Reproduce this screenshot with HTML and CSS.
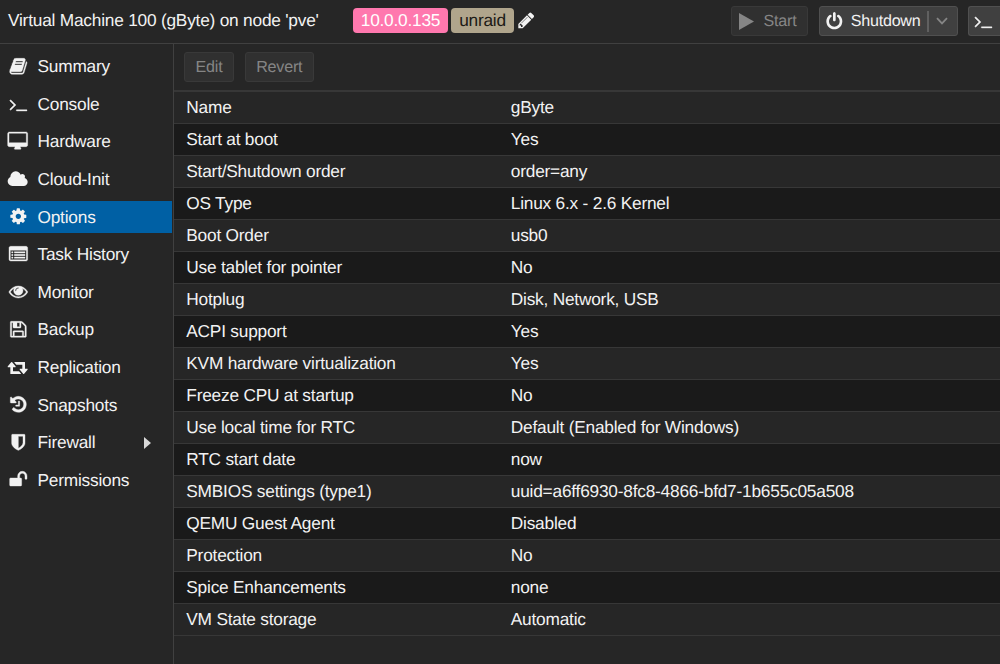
FILE: index.html
```html
<!DOCTYPE html>
<html lang="en">
<head>
<meta charset="utf-8">
<title>Virtual Machine 100 (gByte)</title>
<link rel="stylesheet" href="styles.css">
</head>
<body>
<div class="app">
  <header class="header">
    <div class="title">Virtual Machine 100 (gByte) on node 'pve'</div>
    <div class="tags">
      <span class="tag tag-pink">10.0.0.135</span>
      <span class="tag tag-sand">unraid</span>
      <svg class="pencil" viewBox="0 0 1792 1792"><path d="M491 1536l91-91-235-235-91 91v107h128v128h107zm523-928q0-22-22-22-10 0-17 7l-542 542q-7 7-7 17 0 22 22 22 10 0 17-7l542-542q7-7 7-17zm-54-192l416 416-832 832h-416v-416zm683 96q0 53-37 90l-166 166-416-416 166-165q36-38 90-38 53 0 91 38l235 234q37 39 37 91z"/></svg>
    </div>
    <div class="actions">
      <div class="btn btn-start disabled"><svg class="play" viewBox="0 0 15 17"><path d="M0 0L15 8.5L0 17z"/></svg><span>Start</span></div>
      <div class="btn btn-shutdown"><svg class="icon" viewBox="0 0 1792 1792"><path d="M1664 896q0 156-61 298t-164 245-245 164-298 61-298-61-245-164-164-245-61-298q0-182 80.5-343t226.5-270q43-32 95.5-25t83.5 50q32 42 24.5 94.5t-49.5 84.5q-98 74-151.5 181t-53.5 228q0 104 40.5 198.5t109.5 163.5 163.5 109.5 198.5 40.5 198.5-40.5 163.5-109.5 109.5-163.5 40.5-198.5q0-121-53.5-228t-151.5-181q-42-32-49.5-84.5t24.5-94.5q31-43 84-50t95 25q146 109 226.5 270t80.5 343zm-640-768v640q0 52-38 90t-90 38-90-38-38-90v-640q0-52 38-90t90-38 90 38 38 90z"/></svg><span>Shutdown</span><i class="split"></i><svg class="chevron" viewBox="0 0 12 8"><path d="M1 1.2L6 6.4L11 1.2"/></svg></div>
      <div class="btn btn-console"><svg class="icon bold" viewBox="0 0 1792 1792"><path d="M649 983l-466 466q-10 10-23 10t-23-10l-50-50q-10-10-10-23t10-23l393-393-393-393q-10-10-10-23t10-23l50-50q10-10 23-10t23 10l466 466q10 10 10 23t-10 23zm1079 457v64q0 14-9 23t-23 9h-960q-14 0-23-9t-9-23v-64q0-14 9-23t23-9h960q14 0 23 9t9 23z"/></svg></div>
    </div>
  </header>
  <div class="body">
    <nav class="sidebar">
      <div class="item"><span class="ic"><svg class="icon bold" viewBox="0 0 1792 1792"><path d="M1703 478q40 57 18 129l-275 906q-19 64-76.5 107.5t-122.5 43.5h-923q-77 0-148.5-53.5t-99.5-131.5q-24-67-2-127 0-4 3-27t4-37q1-8-3-21.5t-3-19.5q2-11 8-21t16.5-23.5 16.5-23.5q23-38 45-91.5t30-91.5q3-10 .5-30t-.5-28q3-11 17-28t17-23q21-36 42-92t25-90q1-9-2.5-32t.5-28q4-13 22-30.5t22-22.5q19-26 42.5-84.5t27.5-96.5q1-8-3-25.5t-2-26.5q2-8 9-18t18-23 17-21q8-12 16.5-30.5t15-35 16-36 19.5-32 26.5-23.5 36-11.5 47.5 5.5l-1 3q38-9 51-9h761q74 0 114 56t18 130l-274 906q-36 119-71.5 153.5t-128.5 34.5h-869q-27 0-38 15-11 16-1 43 24 70 144 70h923q29 0 56-15.5t35-41.5l300-987q7-22 5-57 38 15 59 43zm-1064 2q-4 13 2 22.5t20 9.5h608q13 0 25.5-9.5t16.5-22.5l21-64q4-13-2-22.5t-20-9.5h-608q-13 0-25.5 9.5t-16.5 22.5zm-83 256q-4 13 2 22.5t20 9.5h608q13 0 25.5-9.5t16.5-22.5l21-64q4-13-2-22.5t-20-9.5h-608q-13 0-25.5 9.5t-16.5 22.5z"/></svg></span>Summary</div>
      <div class="item"><span class="ic"><svg class="icon bold" viewBox="0 0 1792 1792"><path d="M649 983l-466 466q-10 10-23 10t-23-10l-50-50q-10-10-10-23t10-23l393-393-393-393q-10-10-10-23t10-23l50-50q10-10 23-10t23 10l466 466q10 10 10 23t-10 23zm1079 457v64q0 14-9 23t-23 9h-960q-14 0-23-9t-9-23v-64q0-14 9-23t23-9h960q14 0 23 9t9 23z"/></svg></span>Console</div>
      <div class="item"><span class="ic"><svg class="icon wide bold" viewBox="0 0 2048 1792"><path d="M1856 992v-832q0-13-9.5-22.5t-22.5-9.5h-1600q-13 0-22.5 9.5t-9.5 22.5v832q0 13 9.5 22.5t22.5 9.5h1600q13 0 22.5-9.5t9.5-22.5zm128-832v1088q0 66-47 113t-113 47h-544q0 37 16 77.5t32 71 16 43.5q0 26-19 45t-45 19h-512q-26 0-45-19t-19-45q0-14 16-44t32-70 16-78h-544q-66 0-113-47t-47-113v-1088q0-66 47-113t113-47h1600q66 0 113 47t47 113z"/></svg></span>Hardware</div>
      <div class="item"><span class="ic"><svg class="icon wide" viewBox="0 0 2048 1792"><path d="M1984 1152q0 159-112.5 271.5t-271.5 112.5h-1088q-185 0-316.5-131.5t-131.5-316.5q0-132 71-241.5t187-163.5q-2-28-2-43 0-212 150-362t362-150q158 0 286.5 88t187.5 230q70-62 166-62 106 0 181 75t75 181q0 75-41 138 129 30 213 134.5t84 239.5z"/></svg></span>Cloud-Init</div>
      <div class="item active"><span class="ic"><svg class="icon" viewBox="0 0 1792 1792"><path d="M1152 896q0-106-75-181t-181-75-181 75-75 181 75 181 181 75 181-75 75-181zm512-109v222q0 12-8 23t-20 13l-185 28q-19 54-39 91 35 50 107 138 10 12 10 25t-9 23q-27 37-99 108t-94 71q-12 0-26-9l-138-108q-44 23-91 38-16 136-29 186-7 28-36 28h-222q-14 0-24.5-8.5t-11.5-21.5l-28-184q-49-16-90-37l-141 107q-10 9-25 9-14 0-25-11-126-114-165-168-7-10-7-23 0-12 8-23 15-21 51-66.5t54-70.5q-27-50-41-99l-183-27q-13-2-21-12.5t-8-23.5v-222q0-12 8-23t19-13l186-28q14-46 39-92-40-57-107-138-10-12-10-24 0-10 9-23 26-36 98.5-107.5t94.5-71.5q13 0 26 10l138 107q44-23 91-38 16-136 29-186 7-28 36-28h222q14 0 24.5 8.5t11.5 21.5l28 184q49 16 90 37l142-107q9-9 24-9 13 0 25 10 129 119 165 170 7 8 7 22 0 12-8 23-15 21-51 66.5t-54 70.5q26 50 41 98l183 28q13 2 21 12.5t8 23.5z"/></svg></span>Options</div>
      <div class="item"><span class="ic"><svg class="icon bold" viewBox="0 0 1792 1792"><path fill-rule="evenodd" d="M160 128h1472q66 0 113 47t47 113v1088q0 66-47 113t-113 47H160q-66 0-113-47T0 1376V288q0-66 47-113t113-47zM128 512v864q0 32 32 32h1472q32 0 32-32V512zM256 640h128v128H256zM512 640h1024v128H512zM256 896h128v128H256zM512 896h1024v128H512zM256 1152h128v128H256zM512 1152h1024v128H512z"/></svg></span>Task History</div>
      <div class="item"><span class="ic"><svg class="icon bold" viewBox="0 0 1792 1792"><path d="M1664 960q-152-236-381-353 61 104 61 225 0 185-131.5 316.5t-316.5 131.5-316.5-131.5-131.5-316.5q0-121 61-225-229 117-381 353 133 205 333.5 326.5t434.5 121.5 434.5-121.5 333.5-326.5zm-720-384q0-20-14-34t-34-14q-125 0-214.5 89.5t-89.5 214.5q0 20 14 34t34 14 34-14 14-34q0-86 61-147t147-61q20 0 34-14t14-34zm848 384q0 34-20 69-140 230-376.5 368.5t-499.5 138.5-499.5-139-376.5-368q-20-35-20-69t20-69q140-229 376.5-368t499.5-139 499.5 139 376.5 368q20 35 20 69z"/></svg></span>Monitor</div>
      <div class="item"><span class="ic"><svg class="icon bold" viewBox="0 0 1792 1792"><path d="M512 1536h768v-384h-768v384zm896 0h128v-896q0-14-10-38.5t-20-34.5l-281-281q-10-10-34-20t-39-10v416q0 40-28 68t-68 28h-576q-40 0-68-28t-28-68v-416h-128v1280h128v-416q0-40 28-68t68-28h832q40 0 68 28t28 68v416zm-384-928v-320q0-13-9.5-22.5t-22.5-9.5h-192q-13 0-22.5 9.5t-9.5 22.5v320q0 13 9.5 22.5t22.5 9.5h192q13 0 22.5-9.5t9.5-22.5zm640 32v928q0 40-28 68t-68 28h-1344q-40 0-68-28t-28-68v-1344q0-40 28-68t68-28h928q40 0 88 20t76 48l280 280q28 28 48 76t20 88z"/></svg></span>Backup</div>
      <div class="item"><span class="ic"><svg class="icon wide" viewBox="0 0 2048 1792"><path d="M1344 1504q0 13-9.5 22.5t-22.5 9.5h-960q-8 0-13.5-2t-9-7-5.5-8-3-11.5-1-11.5v-600h-192q-26 0-45-19t-19-45q0-24 15-41l320-384q19-22 49-22t49 22l320 384q15 17 15 41 0 26-19 45t-45 19h-192v384h576q16 0 25 11l160 192q7 10 7 21zm640-416q0 24-15 41l-320 384q-20 23-49 23t-49-23l-320-384q-15-17-15-41 0-26 19-45t45-19h192v-384h-576q-16 0-25-12l-160-192q-7-9-7-20 0-13 9.5-22.5t22.5-9.5h960q8 0 13.5 2t9 7 5.5 8 3 11.5 1 11.5v600h192q26 0 45 19t19 45z"/></svg></span>Replication</div>
      <div class="item"><span class="ic"><svg class="icon bold" viewBox="0 0 1792 1792"><path d="M1664 896q0 156-61 298t-164 245-245 164-298 61q-172 0-327-72.5t-264-204.5q-7-10-6.5-22.5t8.5-20.5l137-138q10-9 25-9 16 2 23 12 73 95 179 147t225 52q104 0 198.5-40.5t163.5-109.5 109.5-163.5 40.5-198.5-40.5-198.5-109.5-163.5-163.5-109.5-198.5-40.5q-98 0-188 35.5t-160 101.5l137 138q31 30 14 69-17 40-59 40h-448q-26 0-45-19t-19-45v-448q0-42 40-59 39-17 69 14l130 129q107-101 244.5-156.5t284.5-55.5q156 0 298 61t245 164 164 245 61 298zm-640-288v448q0 14-9 23t-23 9h-320q-14 0-23-9t-9-23v-64q0-14 9-23t23-9h224v-352q0-14 9-23t23-9h64q14 0 23 9t9 23z"/></svg></span>Snapshots</div>
      <div class="item"><span class="ic"><svg class="icon bold" viewBox="0 0 1792 1792"><path d="M1344 960v-640h-448v1137q119-63 213-137 235-184 235-360zm192-768v768q0 86-33.5 170.5t-83 150-118 127.5-126.5 103-121 77.5-89.5 49.5-42.5 20q-12 6-26 6t-26-6q-16-7-42.5-20t-89.5-49.5-121-77.5-126.5-103-118-127.5-83-150-33.5-170.5v-768q0-26 19-45t45-19h1152q26 0 45 19t19 45z"/></svg></span>Firewall<svg class="expand" viewBox="0 0 7 12"><path d="M0 0L7 6L0 12z"/></svg></div>
      <div class="item"><span class="ic"><svg class="icon bold" viewBox="0 0 1792 1792"><path d="M1728 576v256q0 26-19 45t-45 19h-64q-26 0-45-19t-19-45v-256q0-106-75-181t-181-75-181 75-75 181v192h96q40 0 68 28t28 68v576q0 40-28 68t-68 28h-960q-40 0-68-28t-28-68v-576q0-40 28-68t68-28h672v-192q0-185 131.5-316.5t316.5-131.5 316.5 131.5 131.5 316.5z"/></svg></span>Permissions</div>
    </nav>
    <main class="content">
      <div class="toolbar">
        <div class="btn btn-edit disabled">Edit</div>
        <div class="btn btn-revert disabled">Revert</div>
      </div>
      <div class="grid">
        <div class="row"><span>Name</span><span>gByte</span></div>
        <div class="row"><span>Start at boot</span><span>Yes</span></div>
        <div class="row"><span>Start/Shutdown order</span><span>order=any</span></div>
        <div class="row"><span>OS Type</span><span>Linux 6.x - 2.6 Kernel</span></div>
        <div class="row"><span>Boot Order</span><span>usb0</span></div>
        <div class="row"><span>Use tablet for pointer</span><span>No</span></div>
        <div class="row"><span>Hotplug</span><span>Disk, Network, USB</span></div>
        <div class="row"><span>ACPI support</span><span>Yes</span></div>
        <div class="row"><span>KVM hardware virtualization</span><span>Yes</span></div>
        <div class="row"><span>Freeze CPU at startup</span><span>No</span></div>
        <div class="row"><span>Use local time for RTC</span><span>Default (Enabled for Windows)</span></div>
        <div class="row"><span>RTC start date</span><span>now</span></div>
        <div class="row"><span>SMBIOS settings (type1)</span><span>uuid=a6ff6930-8fc8-4866-bfd7-1b655c05a508</span></div>
        <div class="row"><span>QEMU Guest Agent</span><span>Disabled</span></div>
        <div class="row"><span>Protection</span><span>No</span></div>
        <div class="row"><span>Spice Enhancements</span><span>none</span></div>
        <div class="row"><span>VM State storage</span><span>Automatic</span></div>
      </div>
    </main>
  </div>
</div>
</body>
</html>
```

FILE: styles.css
```css
* { box-sizing: border-box; }
body {
  margin: 0;
  background: #262626;
  color: #f2f2f2;
  font-family: "Liberation Sans", Arial, sans-serif;
  font-size: 17.3px;
  letter-spacing: -0.215px;
  text-rendering: geometricPrecision;
  white-space: nowrap;
  overflow: hidden;
}
svg { display: block; flex: none; fill: currentColor; }
.app { display: flex; flex-direction: column; width: 1000px; height: 664px; overflow: hidden; }

.header { display: flex; flex: none; height: 44px; padding-left: 8px; border-bottom: 1px solid #404040; }
.title { width: 345px; line-height: 40px; }
.tags { display: flex; align-items: flex-start; padding-top: 8px; gap: 3px; }
.tag { height: 25px; line-height: 24px; border-radius: 4px; text-align: center; }
.tag-pink { width: 95px; background: #ff78ae; color: #fff; }
.tag-sand { width: 63px; background: #b0a58c; color: #1c1a16; }
.pencil { width: 18.6px; height: 18.6px; margin: 3px 0 0 -0.5px; }
.actions { display: flex; margin-left: auto; padding-top: 6px; }

.btn {
  display: flex;
  align-items: center;
  flex: none;
  height: 30px;
  font-size: 16.1px;
  background: #404040;
  border: 1px solid #505050;
  border-radius: 3px;
}
.disabled { background: #303030; border-color: #393939; color: #858585; }
.btn-start { width: 77px; padding-left: 7px; margin-right: 11px; }
.play { width: 15px; height: 17px; margin-right: 9.5px; }
.btn-shutdown { width: 139px; padding-left: 4.5px; margin-right: 10px; }
.btn-shutdown .icon { margin-right: 7.5px; }
.split { width: 2px; height: 21px; margin: 0 7px 0 6px; background: #606060; }
.chevron { width: 12px; height: 8px; fill: none; stroke: #858585; stroke-width: 1.8; }
.btn-console { width: 32px; padding-left: 5px; border-right: 0; border-radius: 3px 0 0 3px; }

.body { display: flex; flex: 1; min-height: 0; }
.sidebar { display: flex; flex-direction: column; gap: 6.3px; width: 173px; padding: 7.1px 1px 0 0; }
.item { display: flex; align-items: center; flex: none; height: 31.3px; }
.ic { display: flex; justify-content: center; width: 36px; margin-right: 1.5px; padding-bottom: 1px; }
.icon { width: 18.67px; height: 18.67px; overflow: visible; }
.wide { width: 21.33px; }
.bold { stroke: currentColor; stroke-width: 36; }
.active { background: #0060a4; }
.expand { width: 7px; height: 12px; margin-left: auto; margin-right: 21px; color: #d8d8d8; }

.content { flex: 1; border-left: 1px solid #404040; }
.toolbar { display: flex; gap: 11px; height: 48px; padding: 8px 0 0 10px; border-bottom: 2px solid #373737; }
.btn-edit { width: 50px; justify-content: center; }
.btn-revert { width: 68.5px; justify-content: center; }
.row {
  display: grid;
  grid-template-columns: 324.5px 1fr;
  height: 32px;
  padding-left: 12.3px;
  line-height: 31px;
  border-bottom: 1px solid #373737;
}
.row:nth-child(even) { background: #1a1a1a; }
```
